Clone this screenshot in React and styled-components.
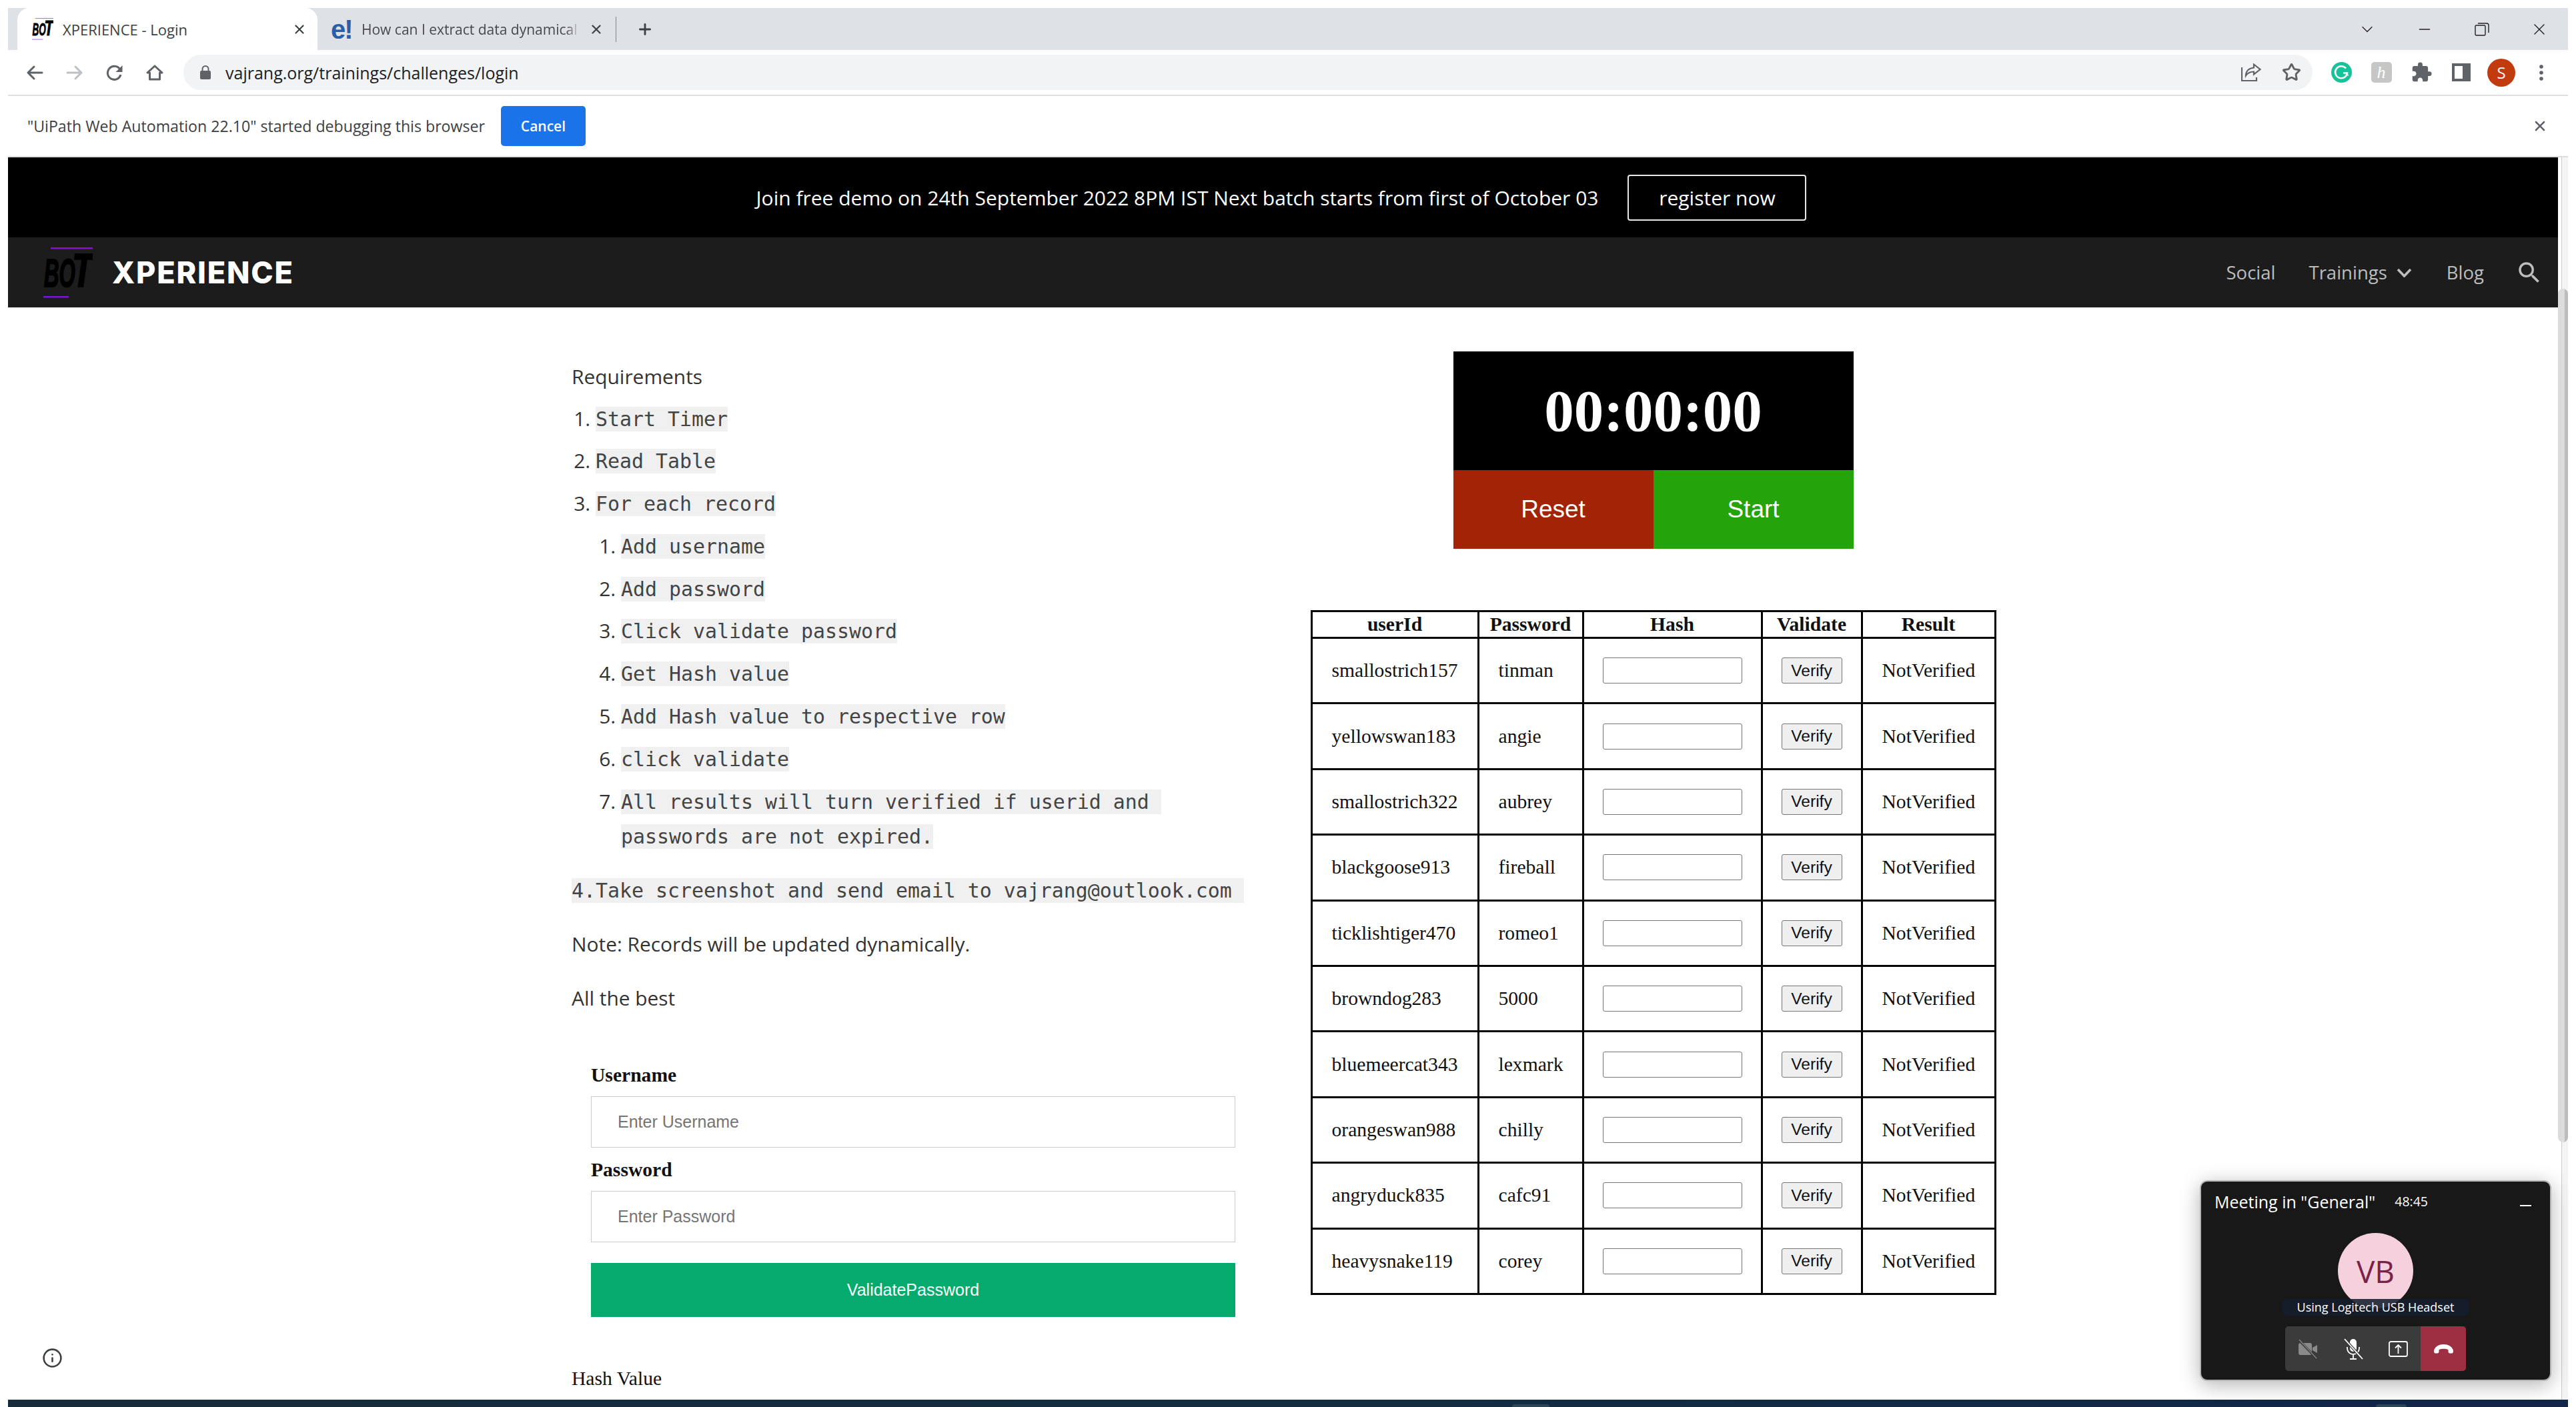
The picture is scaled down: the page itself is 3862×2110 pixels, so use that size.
import React from 'react';
import styled, { createGlobalStyle } from 'styled-components';
import { ChevronDown, Minus, X, Plus, Star, Info } from 'lucide-react';
import { MdExtension, MdSearch } from 'react-icons/md';

const GlobalStyle = createGlobalStyle`
  html, body {
    margin: 0;
    padding: 0;
    width: 3862px;
    height: 2110px;
    overflow: hidden;
    background: #fff;
  }
  * { box-sizing: border-box; }
`;

const Window = styled.div`
  position: relative;
  width: 3850px;
  height: 2110px;
  padding: 12px 0 0 12px;
  display: flex;
  flex-direction: column;
  font-family: "Open Sans", sans-serif;
  color: #333;
`;

/* browser chrome */
const TabStrip = styled.div`
  height: 63px;
  flex: none;
  background: #dee1e6;
  display: flex;
  align-items: center;
  padding-left: 14px;
`;
const ActiveTab = styled.div`
  width: 450px;
  height: 63px;
  background: #fff;
  border-radius: 18px 18px 0 0;
  display: flex;
  align-items: center;
  padding-left: 22px;
`;
const Tab = styled.div`
  width: 447px;
  height: 63px;
  display: flex;
  align-items: center;
  padding-left: 20px;
`;
const TabLogo = styled.span`
  width: 34px;
  flex: none;
  font: 700 40px/40px "Liberation Sans", sans-serif;
  letter-spacing: -2px;
  color: #2c5ea8;
`;
const TabTitle = styled.span`
  font-size: ${p => p.$size}px;
  color: ${p => p.$muted ? '#45484d' : '#3c4043'};
  margin-left: ${p => p.$gap}px;
  width: ${p => p.$width}px;
  white-space: nowrap;
  overflow: hidden;
  ${p => p.$fade && 'mask-image: linear-gradient(to right, #000 94%, transparent);'}
`;
const TabClose = styled.span`
  display: flex;
  margin-left: ${p => p.$gap}px;
  color: #3c4043;
`;
const TabDivider = styled.div`
  width: 1px;
  height: 38px;
  background: #80868b;
  margin-right: 30px;
`;
const WindowControls = styled.div`
  margin-left: auto;
  display: flex;
  align-items: center;
`;
const WindowButton = styled.span`
  width: 86px;
  display: flex;
  justify-content: center;
  color: #202124;
`;
const Toolbar = styled.div`
  height: 69px;
  flex: none;
  background: #fff;
  border-bottom: 2px solid #dedede;
  display: flex;
  align-items: center;
  padding-left: 10px;
`;
const NavButton = styled.span`
  width: 60px;
  display: flex;
  justify-content: center;
  color: ${p => p.$disabled ? '#bdc0c4' : '#5f6368'};
`;
const Omnibox = styled.div`
  width: 3192px;
  height: 53px;
  margin-left: 13px;
  border-radius: 27px;
  background: #f1f3f4;
  display: flex;
  align-items: center;
  padding: 0 2px 0 25px;
`;
const Url = styled.span`
  font-size: 25px;
  color: #202124;
  margin-left: 22px;
  margin-right: auto;
`;
const OmniIcon = styled.span`
  width: 60px;
  display: flex;
  justify-content: center;
  color: #5f6368;
`;
const ExtButton = styled.span`
  width: 60px;
  display: flex;
  justify-content: center;
  color: #5f6368;
`;
const ExtGroup = styled.div`
  display: flex;
  align-items: center;
  margin-left: 13px;
`;
const HoneyExt = styled.span`
  width: 31px;
  height: 31px;
  border-radius: 5px;
  background: #c6c6c6;
  color: #fff;
  font: italic 26px "Liberation Serif", serif;
  display: flex;
  align-items: center;
  justify-content: center;
`;
const Avatar = styled.span`
  width: 42px;
  height: 42px;
  border-radius: 50%;
  background: #c23b0e;
  color: #fff;
  font-size: 24px;
  display: flex;
  align-items: center;
  justify-content: center;
`;
const Infobar = styled.div`
  height: 92px;
  flex: none;
  border-bottom: 2px solid #dcdcdc;
  display: flex;
  align-items: center;
  padding: 0 30px 0 29px;
  font-size: 23.15px;
  color: #3c4043;
`;
const CancelButton = styled.button`
  width: 127px;
  height: 60px;
  margin-left: 24px;
  border: 0;
  border-radius: 5px;
  background: #1a73e8;
  color: #fff;
  font: 600 21px "Open Sans", sans-serif;
`;
const InfobarClose = styled.span`
  margin-left: auto;
  display: flex;
  color: #5f6368;
`;

/* page */
const PageRow = styled.div`
  flex: 1;
  min-height: 0;
  display: flex;
`;
const Viewport = styled.div`
  width: 3823px;
  display: flex;
  flex-direction: column;
`;
const Scrollbar = styled.div`
  flex: 1;
  background: linear-gradient(to right, #fff 5px, #ccc 5px, #ccc 6px, #f4f4f4 6px);
  padding-top: 197px;
`;
const ScrollThumb = styled.div`
  height: 1280px;
  background: linear-gradient(to right, #dcdcdc 10px, #bcbcbc 10px);
  border-radius: 8px;
`;
const Banner = styled.div`
  height: 120px;
  flex: none;
  background: #000;
  color: #fff;
  display: flex;
  align-items: center;
  justify-content: center;
  gap: 44px;
  padding-right: 5px;
  font-size: 30px;
`;
const RegisterButton = styled.button`
  width: 268px;
  height: 69px;
  background: transparent;
  border: 2px solid #e8e8e8;
  border-radius: 4px;
  color: #fff;
  font: 30px "Open Sans", sans-serif;
`;
const NavBar = styled.nav`
  height: 105px;
  flex: none;
  background: #1c1c1c;
  display: flex;
  align-items: center;
  padding: 0 22px 0 53px;
`;
const Brand = styled.span`
  font: 800 45px Inter, sans-serif;
  color: #fff;
  margin-left: 29px;
  letter-spacing: 1.8px;
`;
const NavLinks = styled.div`
  margin-left: auto;
  display: flex;
  align-items: center;
  font-size: 27.5px;
  color: #bdbdbd;
`;
const NavLink = styled.span`
  display: flex;
  align-items: center;
  gap: 14px;
  margin-left: ${p => p.$gap}px;
`;
const Main = styled.main`
  flex: 1;
  min-height: 0;
  display: flex;
  padding-left: 845px;
  overflow: hidden;
`;
const LeftColumn = styled.div`
  width: 1008px;
  padding-top: 78px;
  font-size: 29.9px;
  line-height: 52px;
`;
const Text = styled.p`
  margin: 0 0 ${p => p.$after ?? 29}px;
`;
const Steps = styled.ol`
  margin: ${p => p.$nested ? '11.8px 0 0' : '10.5px 0 29.5px'};
  padding-left: ${p => p.$nested ? 38 : 36}px;
  & > li { margin-bottom: 11.8px; }
  & > li:last-child { margin-bottom: 0; }
`;
const Code = styled.code`
  font: 29.9px/1 "DejaVu Sans Mono", monospace;
  background: #f0f0f0;
  color: #444;
  white-space: pre;
  padding: 1px 0;
`;
const LoginForm = styled.form`
  margin: 67px 0 0 29px;
  width: 966px;
`;
const FieldLabel = styled.label`
  display: block;
  font: 700 29.6px/44px "Liberation Serif", serif;
  color: #111;
  margin-bottom: 10px;
`;
const TextInput = styled.input`
  display: block;
  width: 100%;
  height: 77px;
  padding: 0 39px;
  border: 1px solid #ccc;
  background: #fff;
  font: 25px "Liberation Sans", sans-serif;
  margin-bottom: 11px;
  &::placeholder { color: #757575; }
`;
const SubmitButton = styled.button`
  width: 100%;
  height: 81px;
  margin-top: 20px;
  border: 0;
  background: #05ab6d;
  color: #fff;
  font: 25px "Liberation Sans", sans-serif;
`;
const HashLabel = styled.div`
  margin: 70px 0 0;
  font: 29.6px/44px "Liberation Serif", serif;
  color: #111;
`;
const RightColumn = styled.div`
  width: 1025px;
  margin-left: 101px;
  padding-top: 66px;
  display: flex;
  flex-direction: column;
  align-items: center;
`;
const Timer = styled.div`
  width: 600px;
`;
const TimerDisplay = styled.div`
  height: 178px;
  background: #000;
  color: #fff;
  font: 700 89px "Liberation Serif", serif;
  display: flex;
  align-items: center;
  justify-content: center;
`;
const TimerButtons = styled.div`
  display: flex;
`;
const TimerButton = styled.button`
  flex: 1;
  height: 118px;
  border: 0;
  background: ${p => p.$bg};
  color: #fff;
  font: 37px "Liberation Sans", sans-serif;
`;
const UserTable = styled.table`
  width: 1025px;
  margin-top: 92px;
  border-collapse: collapse;
  table-layout: fixed;
  font: 29.6px "Liberation Serif", serif;
  color: #111;
  th, td { border: 3px solid #000; }
  th {
    height: 40px;
    padding: 0;
    font-weight: 700;
    text-align: center;
  }
  td {
    height: 98.4px;
    padding: 0 0 0 29px;
  }
`;
const CenterCell = styled.td`
  && { padding: 0; text-align: center; }
`;
const HashInput = styled.input`
  width: 209px;
  height: 39px;
  padding: 0 4px;
  border: 1.5px solid #767676;
  border-radius: 3px;
  background: #fff;
  vertical-align: middle;
`;
const VerifyButton = styled.button`
  width: 91px;
  height: 39px;
  padding: 0;
  border: 1.5px solid #767676;
  border-radius: 3px;
  background: #efefef;
  color: #111;
  font: 24.6px "Liberation Sans", sans-serif;
  vertical-align: middle;
`;
const BottomBar = styled.div`
  height: 11px;
  flex: none;
  background: linear-gradient(to right, #162c3a, #132c40 55%, #12264a);
  display: flex;
  align-items: flex-end;
  padding-left: 2255px;
`;
const TaskbarTab = styled.span`
  width: ${p => p.$width}px;
  height: 4px;
  margin-right: ${p => p.$after}px;
  background: #2c4656;
  border-radius: 4px 4px 0 0;
`;

/* overlays */
const PrivacyIcon = styled.span`
  position: absolute;
  left: 63px;
  top: 2021px;
  display: flex;
  color: #3c4043;
`;
const MeetingWindow = styled.div`
  position: absolute;
  left: 3298px;
  top: 1770px;
  width: 527px;
  height: 301px;
  background: #181818;
  border: 2px solid #b5b5b5;
  border-radius: 11px;
  box-shadow: 0 6px 30px rgba(0, 0, 0, .3);
  color: #fff;
  display: flex;
  flex-direction: column;
  align-items: center;
`;
const MeetingHeader = styled.div`
  width: 100%;
  display: flex;
  align-items: center;
  padding: 12px 28px 0 20px;
  font-size: 25px;
  line-height: 36px;
`;
const MeetingTime = styled.span`
  font-size: 19.5px;
  margin-left: 29px;
`;
const MeetingMinimize = styled.span`
  margin-left: auto;
  width: 17px;
  height: 2px;
  margin-top: 12px;
  background: #fff;
`;
const MeetingAvatar = styled.div`
  width: 113px;
  height: 113px;
  margin-top: 29px;
  border-radius: 50%;
  background: #f4d1dd;
  color: #7a2348;
  font-size: 46px;
  font-weight: 500;
  display: flex;
  align-items: center;
  justify-content: center;
  flex: none;
`;
const DeviceHint = styled.div`
  width: 279px;
  height: 25px;
  margin-top: -14px;
  border-radius: 6px;
  background: rgba(20, 30, 45, .88);
  font-size: 18px;
  line-height: 25px;
  text-align: center;
  white-space: nowrap;
  z-index: 1;
`;
const CallControls = styled.div`
  width: 271px;
  height: 67px;
  margin-top: 16px;
  border-radius: 5px;
  overflow: hidden;
  background: #3b3b3b;
  display: flex;
`;
const CallButton = styled.span`
  flex: 1;
  display: flex;
  align-items: center;
  justify-content: center;
  background: ${p => p.$bg || 'transparent'};
`;

/* drawings */
const BotLogo = ({ size, lineColor }) => (
  <svg width={size} height={size * 76 / 74} viewBox="0 0 74 76" style={{ flex: 'none' }}>
    <rect x="11" y="0" width="63" height="2.500" fill={lineColor} />
    <rect x="0" y="73" width="38" height="2.500" fill={lineColor} />
    <g fontFamily="Liberation Sans" fontWeight="700" fontStyle="italic" fill="#000" stroke="#000" strokeWidth="2">
      <text transform="translate(1 59) scale(0.52 1)" fontSize="60">BO</text>
      <text transform="translate(43 59) scale(0.72 1)" fontSize="71">T</text>
    </g>
  </svg>
);

const NavChevron = () => (
  <svg width="23" height="14" viewBox="0 0 23 14" fill="none" stroke="currentColor" strokeWidth="3.600">
    <path d="M2 2l9.500 10L21 2" />
  </svg>
);
const ArrowIcon = ({ flip }) => (
  <svg width="26" height="24" viewBox="0 0 26 24" fill="none" stroke="currentColor" strokeWidth="3" strokeLinecap="round" strokeLinejoin="round" style={flip ? { transform: 'scaleX(-1)' } : undefined}>
    <path d="M24 12H3M12 3l-9 9 9 9" />
  </svg>
);
const ReloadIcon = () => (
  <svg width="26" height="24" viewBox="0 0 26 24" fill="none" stroke="currentColor" strokeWidth="3">
    <path d="M22 15a10 10 0 1 1-1.500-8.500" />
    <path d="M24.500 1v10h-10z" fill="currentColor" stroke="none" />
  </svg>
);
const HomeIcon = () => (
  <svg width="26" height="24" viewBox="0 0 26 24" fill="none" stroke="currentColor" strokeWidth="3" strokeLinejoin="round">
    <path d="M13 2L2 12h3.500v10h15V12H24z" />
  </svg>
);
const LockIcon = () => (
  <svg width="16" height="21" viewBox="0 0 16 21" fill="#5f6368">
    <rect y="8" width="16" height="13" rx="2" />
    <path d="M3.500 9V5.500a4.500 4.500 0 0 1 9 0V9" fill="none" stroke="#5f6368" strokeWidth="2" />
  </svg>
);
const ShareIcon = () => (
  <svg width="30" height="27" viewBox="0 0 30 27" fill="none" stroke="currentColor" strokeWidth="2.200">
    <path d="M1 6v20h22v-5" />
    <path d="M19 1.500L28.500 9 19 16.500V12.500c-5 0-9 1.500-12 6 0-7 5-11.500 12-12z" />
  </svg>
);
const GrammarlyIcon = () => (
  <svg width="31" height="31" viewBox="0 0 31 31" fill="none">
    <circle cx="15.500" cy="15.500" r="15.500" fill="#15c39a" />
    <path d="M22 9.500a9 9 0 1 0 2 7h-6" stroke="#fff" strokeWidth="2.600" />
    <path d="M21 20l3-3.500 2.500 4z" fill="#fff" />
  </svg>
);
const SidePanelIcon = () => (
  <svg width="28" height="27" viewBox="0 0 28 27">
    <rect width="28" height="27" fill="#5f6368" />
    <rect x="4" y="4" width="12" height="19" fill="#fff" />
  </svg>
);
const DotsIcon = () => (
  <svg width="6" height="24" viewBox="0 0 6 24" fill="#5f6368">
    <circle cx="3" cy="3" r="2.800" /><circle cx="3" cy="12" r="2.800" /><circle cx="3" cy="21" r="2.800" />
  </svg>
);
const RestoreIcon = () => (
  <svg width="22" height="20" viewBox="0 0 22 20" fill="none" stroke="#202124" strokeWidth="1.400">
    <rect x="1" y="4" width="15" height="15" rx="1.500" />
    <path d="M5 1h13a3 3 0 0 1 3 3v11" />
  </svg>
);
const CameraOffIcon = () => (
  <svg width="30" height="30" viewBox="0 0 30 30">
    <rect x="1" y="6" width="20" height="18" rx="3" fill="#8a8a8a" />
    <path d="M22 13l7-4v12l-7-4z" fill="#8a8a8a" />
    <path d="M1 1l27 28" stroke="#3b3b3b" strokeWidth="3.500" />
    <path d="M2 1l26 28" stroke="#8a8a8a" strokeWidth="1.200" />
  </svg>
);
const MicOffIcon = () => (
  <svg width="30" height="32" viewBox="0 0 30 32" fill="none" stroke="#fff" strokeWidth="1.800">
    <rect x="10" y="1" width="10" height="19" rx="5" fill="#fff" stroke="none" />
    <path d="M6 13v2a9 9 0 0 0 18 0v-2M15 24v7M10 31h10" />
    <path d="M2 1l27 30" stroke="#3b3b3b" strokeWidth="4" />
    <path d="M2 1l27 30" strokeWidth="1.800" />
  </svg>
);
const PresentIcon = () => (
  <svg width="29" height="24" viewBox="0 0 29 24" fill="none" stroke="#fff" strokeWidth="1.800">
    <rect x="1" y="1" width="27" height="22" rx="2.500" />
    <path d="M14.500 19V6M10 10.500L14.500 6l4.500 4.500" />
  </svg>
);
const HangupIcon = () => (
  <svg width="29" height="14" viewBox="0 0 29 14" fill="#fff">
    <path d="M0 9C2 3 8 0 14.500 0S27 3 29 9c.4 2-.5 4-2 4.500h-3c-1.400 0-2.500-1-2.500-2.500V8c-2-.9-4.500-1.300-7-1.300S9.500 7.100 7.500 8v3c0 1.500-1.100 2.500-2.500 2.500H2C.5 13 -.4 11 0 9z" />
  </svg>
);

const users = [
  ['smallostrich157', 'tinman'],
  ['yellowswan183', 'angie'],
  ['smallostrich322', 'aubrey'],
  ['blackgoose913', 'fireball'],
  ['ticklishtiger470', 'romeo1'],
  ['browndog283', '5000'],
  ['bluemeercat343', 'lexmark'],
  ['orangeswan988', 'chilly'],
  ['angryduck835', 'cafc91'],
  ['heavysnake119', 'corey'],
];

const App = () => (
  <Window>
    <GlobalStyle />
    <TabStrip>
      <ActiveTab>
        <BotLogo size={32} lineColor="#b56ee8" />
        <TabTitle $size={22} $gap={14} $width={344}>XPERIENCE - Login</TabTitle>
        <TabClose $gap={0}><X size={22} strokeWidth={2.4} /></TabClose>
      </ActiveTab>
      <Tab>
        <TabLogo>e!</TabLogo>
        <TabTitle $size={21} $gap={12} $width={327} $fade $muted>How can I extract data dynamical</TabTitle>
        <TabClose $gap={14}><X size={22} strokeWidth={2.4} /></TabClose>
      </Tab>
      <TabDivider />
      <Plus size={26} strokeWidth={2.6} color="#3c4043" />
      <WindowControls>
        <WindowButton><ChevronDown size={28} strokeWidth={1.2} /></WindowButton>
        <WindowButton><Minus size={26} strokeWidth={1.4} /></WindowButton>
        <WindowButton><RestoreIcon /></WindowButton>
        <WindowButton><X size={28} strokeWidth={1.2} /></WindowButton>
      </WindowControls>
    </TabStrip>

    <Toolbar>
      <NavButton><ArrowIcon /></NavButton>
      <NavButton $disabled><ArrowIcon flip /></NavButton>
      <NavButton><ReloadIcon /></NavButton>
      <NavButton><HomeIcon /></NavButton>
      <Omnibox>
        <LockIcon />
        <Url>vajrang.org/trainings/challenges/login</Url>
        <OmniIcon><ShareIcon /></OmniIcon>
        <OmniIcon><Star size={29} strokeWidth={2.4} /></OmniIcon>
      </Omnibox>
      <ExtGroup>
        <ExtButton><GrammarlyIcon /></ExtButton>
        <ExtButton><HoneyExt>h</HoneyExt></ExtButton>
        <ExtButton><MdExtension size={33} /></ExtButton>
        <ExtButton><SidePanelIcon /></ExtButton>
        <ExtButton><Avatar>S</Avatar></ExtButton>
        <ExtButton><DotsIcon /></ExtButton>
      </ExtGroup>
    </Toolbar>

    <Infobar>
      "UiPath Web Automation 22.10" started debugging this browser
      <CancelButton>Cancel</CancelButton>
      <InfobarClose><X size={24} strokeWidth={2.6} /></InfobarClose>
    </Infobar>

    <PageRow>
      <Viewport>
        <Banner>
          Join free demo on 24th September 2022 8PM IST Next batch starts from first of October 03
          <RegisterButton>register now</RegisterButton>
        </Banner>
        <NavBar>
          <BotLogo size={74} lineColor="#8410d8" />
          <Brand>XPERIENCE</Brand>
          <NavLinks>
            <NavLink>Social</NavLink>
            <NavLink $gap={50}>Trainings <NavChevron /></NavLink>
            <NavLink $gap={52}>Blog</NavLink>
            <NavLink $gap={47}><MdSearch size={42} /></NavLink>
          </NavLinks>
        </NavBar>
        <Main>
          <LeftColumn>
            <Text $after={0}>Requirements</Text>
            <Steps>
              <li><Code>Start Timer</Code></li>
              <li><Code>Read Table</Code></li>
              <li>
                <Code>For each record</Code>
                <Steps $nested>
                  <li><Code>Add username</Code></li>
                  <li><Code>Add password</Code></li>
                  <li><Code>Click validate password</Code></li>
                  <li><Code>Get Hash value</Code></li>
                  <li><Code>Add Hash value to respective row</Code></li>
                  <li><Code>click validate</Code></li>
                  <li><Code>{'All results will turn verified if userid and \npasswords are not expired.'}</Code></li>
                </Steps>
              </li>
            </Steps>
            <Text><Code>{'4.Take screenshot and send email to vajrang@outlook.com '}</Code></Text>
            <Text>Note: Records will be updated dynamically.</Text>
            <Text $after={0}>All the best</Text>
            <LoginForm>
              <FieldLabel>Username</FieldLabel>
              <TextInput placeholder="Enter Username" />
              <FieldLabel>Password</FieldLabel>
              <TextInput placeholder="Enter Password" />
              <SubmitButton type="button">ValidatePassword</SubmitButton>
            </LoginForm>
            <HashLabel>Hash Value</HashLabel>
          </LeftColumn>
          <RightColumn>
            <Timer>
              <TimerDisplay>00:00:00</TimerDisplay>
              <TimerButtons>
                <TimerButton $bg="#a32307">Reset</TimerButton>
                <TimerButton $bg="#24a30a">Start</TimerButton>
              </TimerButtons>
            </Timer>
            <UserTable>
              <colgroup>
                <col style={{ width: 250 }} />
                <col style={{ width: 157 }} />
                <col style={{ width: 268 }} />
                <col style={{ width: 150 }} />
                <col style={{ width: 200 }} />
              </colgroup>
              <thead>
                <tr>
                  <th>userId</th>
                  <th>Password</th>
                  <th>Hash</th>
                  <th>Validate</th>
                  <th>Result</th>
                </tr>
              </thead>
              <tbody>
                {users.map(([userId, password]) => (
                  <tr key={userId}>
                    <td>{userId}</td>
                    <td>{password}</td>
                    <CenterCell><HashInput /></CenterCell>
                    <CenterCell><VerifyButton type="button">Verify</VerifyButton></CenterCell>
                    <td>NotVerified</td>
                  </tr>
                ))}
              </tbody>
            </UserTable>
          </RightColumn>
        </Main>
      </Viewport>
      <Scrollbar><ScrollThumb /></Scrollbar>
    </PageRow>
    <BottomBar>
      <TaskbarTab $width={56} $after={1239} />
      <TaskbarTab $width={46} $after={0} />
    </BottomBar>

    <PrivacyIcon><Info size={31} strokeWidth={2} /></PrivacyIcon>

    <MeetingWindow>
      <MeetingHeader>
        Meeting in "General"
        <MeetingTime>48:45</MeetingTime>
        <MeetingMinimize />
      </MeetingHeader>
      <MeetingAvatar>VB</MeetingAvatar>
      <DeviceHint>Using Logitech USB Headset</DeviceHint>
      <CallControls>
        <CallButton><CameraOffIcon /></CallButton>
        <CallButton><MicOffIcon /></CallButton>
        <CallButton><PresentIcon /></CallButton>
        <CallButton $bg="#9e2f43"><HangupIcon /></CallButton>
      </CallControls>
    </MeetingWindow>
  </Window>
);

export default App;
